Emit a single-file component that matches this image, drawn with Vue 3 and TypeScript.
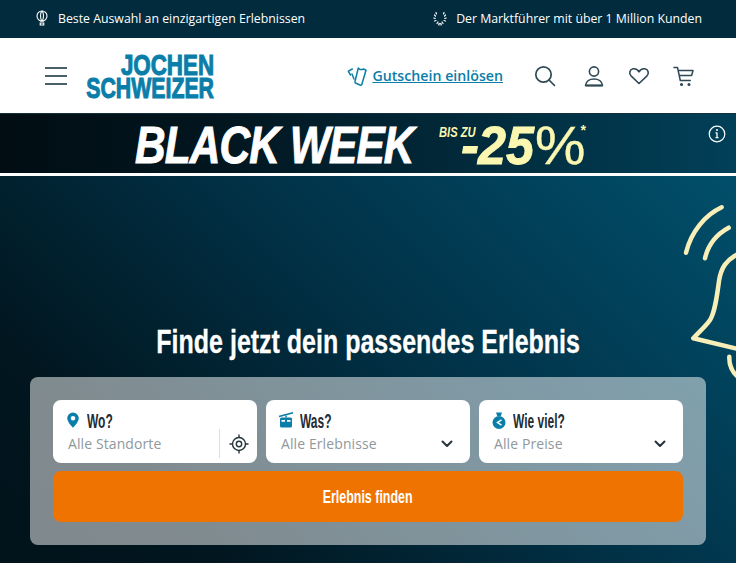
<script setup lang="ts">
interface SearchField {
  label: string;
  value: string;
  icon: 'pin' | 'cable' | 'money';
}

const fields: SearchField[] = [
  { label: 'Wo?', value: 'Alle Standorte', icon: 'pin' },
  { label: 'Was?', value: 'Alle Erlebnisse', icon: 'cable' },
  { label: 'Wie viel?', value: 'Alle Preise', icon: 'money' },
];
</script>

<template>
  <div class="page">
    <div class="topbar">
      <div class="usp">
        <svg width="16" height="16" viewBox="0 0 16 16" fill="none" stroke="currentColor" stroke-width="1.1">
          <circle cx="8" cy="6" r="5" />
          <path d="M8 1C6 2.5 6 8.500 8 11C10 8.500 10 2.500 8 1M6 11h4M6.200 13h3.600v2H6.200z" />
        </svg>
        <span>Beste Auswahl an einzigartigen Erlebnissen</span>
      </div>
      <div class="usp">
        <svg width="16" height="16" viewBox="0 0 16 16" fill="none" stroke="currentColor" stroke-width="1.200" stroke-linecap="round">
          <path d="M4 2.500l.5 1.500M2.500 5l1 1.200M1.800 8l1.400.5M2.500 11l1.500-.5M5 13.500l1-1.500M7 15c-.5-.8-.5-1.200 1-1.500c1.500.3 1.500.7 1 1.500" />
          <path d="M12 2.500l-.5 1.500M13.500 5l-1 1.200M14.200 8l-1.400.5M13.500 11l-1.500-.5M11 13.500l-1-1.500" />
        </svg>
        <span>Der Marktführer mit über 1 Million Kunden</span>
      </div>
    </div>

    <header class="header">
      <div class="burger"><i></i><i></i><i></i></div>
      <div class="logo">
        <span class="logo-line jochen">JOCHEN</span>
        <span class="logo-line schweizer">SCHWEIZER</span>
      </div>
      <a class="voucher">
        <svg width="20" height="20" viewBox="0 0 20 20" fill="none" stroke="currentColor" stroke-width="1.500" stroke-linejoin="round" stroke-linecap="round">
          <path d="M11.300 2L13 3.500L15.500 3.500L16.500 3L19 4.200L14.700 18.700Q14 19.500 13 19L8.400 17Q7.700 16.500 8 15.500Z" />
          <path d="M5.300 3L1.300 5.200L3.500 9M5 8L7 13" />
        </svg>
        <span>Gutschein einlösen</span>
      </a>
      <nav class="actions">
        <svg class="search" width="22" height="22" viewBox="0 0 22 22" fill="none" stroke="currentColor" stroke-width="1.700" stroke-linecap="round">
          <circle cx="9.500" cy="9.500" r="7.700" />
          <path d="M15 15l5.500 5.500" />
        </svg>
        <svg width="22" height="22" viewBox="0 0 22 22" fill="none" stroke="currentColor" stroke-width="1.600">
          <circle cx="11" cy="6.500" r="4.600" />
          <path d="M2.500 20.500c.5-4 4-6.500 8.500-6.500s8 2.500 8.500 6.500z" stroke-linejoin="round" />
          <path d="M2.500 20.500h17" stroke-width="2" />
        </svg>
        <svg width="22" height="22" viewBox="0 0 22 22" fill="none" stroke="currentColor" stroke-width="1.600" stroke-linejoin="round">
          <path d="M11 18.500L3 10.800C.8 8.500 1.500 4.500 5 3.800c2.500-.4 4.800.8 6 3c1.200-2.200 3.500-3.400 6-3c3.500.7 4.200 4.700 2 7z" />
        </svg>
        <svg width="22" height="22" viewBox="0 0 22 22" fill="none" stroke="currentColor" stroke-width="1.500" stroke-linecap="round" stroke-linejoin="round">
          <path d="M1 2.500h3.500l2.800 13h10M5.500 5.500h14.500l-1.200 4.500M6.500 10.500h12" />
          <circle cx="8.500" cy="19.500" r=".8" fill="currentColor" />
          <circle cx="16" cy="19.500" r=".8" fill="currentColor" />
        </svg>
      </nav>
    </header>

    <div class="banner">
      <span class="black-week">BLACK WEEK</span>
      <div class="promo">
        <span class="bis">BIS ZU</span>
        <span class="minus">-</span><span class="digits">25</span><span class="percent">%</span>
        <span class="star">*</span>
      </div>
      <svg class="info" width="18" height="18" viewBox="0 0 18 18" fill="none" stroke="#fff" stroke-width="1.200">
        <circle cx="9" cy="9" r="7.800" />
        <path d="M9 7.500v5M7.500 7.800H9M7.500 12.700h3" stroke-width="1.300" />
        <circle cx="9" cy="5" r="1" fill="#fff" stroke="none" />
      </svg>
    </div>

    <section class="hero">
      <svg class="bell" width="60" height="190" viewBox="0 0 60 190" fill="none" stroke="#f8efb8" stroke-width="4.500" stroke-linecap="round" stroke-linejoin="round">
        <path d="M45.700 11.300C29 19 15 36 10 56.700" />
        <path d="M52.700 31.700C41 38 32 49 29 62.300" />
        <path d="M62 58C50 64 45 72 43 85C41 100 39 116 34 124C30 130 24 135 17.300 142.300L62 153" />
        <path d="M53.300 160.700C53 170 56 176 62 181" />
      </svg>

      <h1 class="title">Finde jetzt dein passendes Erlebnis</h1>

      <div class="panel">
        <div class="fields">
          <div v-for="field in fields" :key="field.label" class="field">
            <div class="field-label">
              <span class="field-icon">
                <svg v-if="field.icon === 'pin'" width="14" height="16" viewBox="0 0 14 16">
                  <path fill-rule="evenodd" fill="#0a7ea8" d="M7 0.500a5.800 5.800 0 0 0-5.800 5.800C1.200 10 7 15.800 7 15.800s5.800-5.800 5.800-9.500A5.800 5.800 0 0 0 7 .5zm0 3.500a2.300 2.300 0 1 1 0 4.600a2.300 2.300 0 0 1 0-4.600z" />
                </svg>
                <svg v-else-if="field.icon === 'cable'" width="16" height="16" viewBox="0 0 16 16">
                  <path d="M1 4.500L15 .8" stroke="#0a7ea8" stroke-width="1.700" fill="none" />
                  <path d="M7.300 3.500h1.500v2H7.300z" fill="#0a7ea8" />
                  <rect x="2" y="5.500" width="12" height="10" rx="1.500" fill="#0a7ea8" />
                  <path d="M3.500 8h3.500v1.800H3.500zM9 8h3.500v1.800H9z" fill="#fff" />
                </svg>
                <svg v-else width="16" height="17" viewBox="0 0 16 17">
                  <path d="M5 .5h6L9.800 4h-3.600z" fill="#0a7ea8" />
                  <circle cx="8" cy="10.500" r="6.500" fill="#0a7ea8" />
                  <path d="M10.500 7.800L6.500 10.500l4 2.700" stroke="#fff" stroke-width="1.500" fill="none" />
                </svg>
              </span>
              <span class="label-text">{{ field.label }}</span>
            </div>
            <div class="field-value">
              <span>{{ field.value }}</span>
              <div v-if="field.icon === 'pin'" class="locate">
                <svg width="20" height="20" viewBox="0 0 20 20" fill="none" stroke="#26343b" stroke-width="1.400">
                  <circle cx="10" cy="10" r="6.500" />
                  <circle cx="10" cy="10" r="2.700" />
                  <path d="M10 .5v3M10 16.500v3M.5 10h3M16.500 10h3" />
                </svg>
              </div>
              <svg v-else class="chevron" width="12" height="8" viewBox="0 0 12 8" fill="none" stroke="#26343b" stroke-width="2" stroke-linecap="round" stroke-linejoin="round">
                <path d="M1.500 1.500L6 6l4.500-4.500" />
              </svg>
            </div>
          </div>
        </div>
        <button class="submit"><span class="submit-text">Erlebnis finden</span></button>
      </div>
    </section>
  </div>
</template>

<style>
html,
body {
  margin: 0;
  background: #fff;
  overflow: hidden;
}
</style>

<style scoped>
.page {
  width: 736px;
  height: 563px;
  display: flex;
  flex-direction: column;
  overflow: hidden;
  font-family: 'Open Sans', 'Noto Sans', sans-serif;
}

.topbar {
  height: 38px;
  flex: none;
  box-sizing: border-box;
  display: flex;
  justify-content: space-between;
  align-items: center;
  padding: 0 34px 2px;
  background: #022c3d;
  color: #fff;
  font-size: 12.300px;
}

.usp {
  display: flex;
  align-items: center;
  gap: 8px;
}

.header {
  height: 76px;
  flex: none;
  box-sizing: border-box;
  display: flex;
  align-items: center;
  padding: 0 41px 0 45px;
  background: #fff;
  border-bottom: 1px solid #12303d;
}

.burger {
  width: 22px;
  margin-top: 1px;
  display: flex;
  flex-direction: column;
  gap: 6px;
}

.burger i {
  display: block;
  height: 2px;
  background: #4a5f69;
}

.logo {
  margin-left: 19px;
  margin-top: 1px;
  width: 128px;
  display: flex;
  flex-direction: column;
  align-items: flex-end;
  color: #0a7ea8;
  font-family: 'Liberation Sans', Arial, sans-serif;
  font-weight: 700;
  font-size: 30px;
  line-height: 23px;
}

.logo-line {
  display: block;
  white-space: nowrap;
  transform-origin: right center;
  -webkit-text-stroke: 1.100px #0a7ea8;
}

.jochen {
  transform: scaleX(0.745);
}

.schweizer {
  transform: scaleX(0.71);
}

.voucher {
  margin-left: auto;
  display: flex;
  align-items: center;
  gap: 5px;
  color: #0a7ea8;
  font-size: 14.200px;
  font-weight: 600;
  text-decoration: underline;
}

.actions {
  margin-left: 31px;
  display: flex;
  align-items: center;
  gap: 23px;
  color: #2f4a56;
}

.search {
  margin-right: 4px;
}

.banner {
  height: 62px;
  flex: none;
  box-sizing: border-box;
  position: relative;
  display: flex;
  align-items: center;
  padding: 3px 0 0 135px;
  background: linear-gradient(90deg, #010d13 0%, #02161f 30%, #014059 100%);
  border-bottom: 3px solid #fff;
  font-family: 'Liberation Sans', Arial, sans-serif;
  font-weight: 700;
  font-style: italic;
}

.black-week {
  flex: none;
  width: 304px;
  color: #fff;
  font-size: 51px;
  letter-spacing: -1px;
  white-space: nowrap;
  transform-origin: left center;
  transform: scaleX(0.83);
  -webkit-text-stroke: 1px #fff;
}

.promo {
  position: relative;
  display: flex;
  align-items: center;
  padding-left: 22px;
  color: #fbf7b0;
  font-size: 54px;
  line-height: 40px;
  white-space: nowrap;
}

.minus {
  width: 17px;
  -webkit-text-stroke: 1px #fbf7b0;
}

.digits {
  display: inline-block;
  width: 57px;
  transform-origin: left center;
  transform: scaleX(0.93);
  -webkit-text-stroke: 1px #fbf7b0;
}

.percent {
  display: inline-block;
  font-weight: 400;
  font-style: normal;
  transform-origin: left center;
  transform: scaleX(1.05);
  -webkit-text-stroke: 0.400px #fbf7b0;
}

.bis {
  position: absolute;
  left: 0;
  top: 0;
  font-size: 14px;
  line-height: 14px;
  transform-origin: left center;
  transform: scaleX(0.8);
}

.star {
  position: absolute;
  left: 141px;
  top: -2px;
  font-size: 14px;
  line-height: 14px;
}

.info {
  position: absolute;
  right: 10px;
  top: 11px;
}

.hero {
  flex: 1;
  position: relative;
  overflow: hidden;
  display: flex;
  flex-direction: column;
  align-items: center;
  justify-content: flex-end;
  padding: 0 30px 18px;
  background: linear-gradient(225deg, #014f6b 0%, #013349 42%, #01161f 80%, #01131b 100%);
}

.bell {
  position: absolute;
  right: 0;
  top: 20px;
}

.title {
  margin: 0 0 16px;
  color: #fff;
  font-family: 'Liberation Sans', Arial, sans-serif;
  font-size: 34px;
  font-weight: 700;
  line-height: 40px;
  white-space: nowrap;
  transform: scaleX(0.735);
  -webkit-text-stroke: 0.300px #fff;
}

.panel {
  align-self: stretch;
  height: 168px;
  box-sizing: border-box;
  padding: 23px 23px 23px;
  display: flex;
  flex-direction: column;
  gap: 8px;
  border-radius: 8px;
  background: rgba(255, 255, 255, 0.5);
}

.fields {
  display: grid;
  grid-template-columns: repeat(3, 1fr);
  gap: 9px;
}

.field {
  height: 63px;
  box-sizing: border-box;
  padding: 11px 13px 0 12px;
  border-radius: 8px;
  background: #fff;
  display: flex;
  flex-direction: column;
}

.field-label {
  height: 20px;
  display: flex;
  align-items: center;
  gap: 6px;
}

.field-icon {
  width: 16px;
  margin-top: -2px;
  display: flex;
  justify-content: center;
}

.label-text {
  display: inline-block;
  font-family: 'Liberation Sans', Arial, sans-serif;
  font-size: 21px;
  font-weight: 700;
  color: #1e2d35;
  white-space: nowrap;
  transform-origin: left center;
  transform: scaleX(0.57);
}

.field-value {
  position: relative;
  margin-top: 1px;
  padding-left: 3px;
  display: flex;
  align-items: center;
  justify-content: space-between;
  height: 23px;
  font-size: 14px;
  letter-spacing: 0.1px;
  color: #8f989c;
}

.locate {
  position: absolute;
  right: -13px;
  top: -3px;
  width: 37px;
  height: 29px;
  display: flex;
  align-items: center;
  justify-content: center;
  border-left: 1px solid #dcdfe0;
}

.chevron {
  margin-right: 4px;
}

.submit {
  height: 51px;
  border: 0;
  border-radius: 8px;
  background: #ef7300;
  color: #fff;
  font-family: 'Liberation Sans', Arial, sans-serif;
  font-size: 19px;
  font-weight: 700;
}

.submit-text {
  display: inline-block;
  white-space: nowrap;
  transform: scaleX(0.655);
}
</style>
